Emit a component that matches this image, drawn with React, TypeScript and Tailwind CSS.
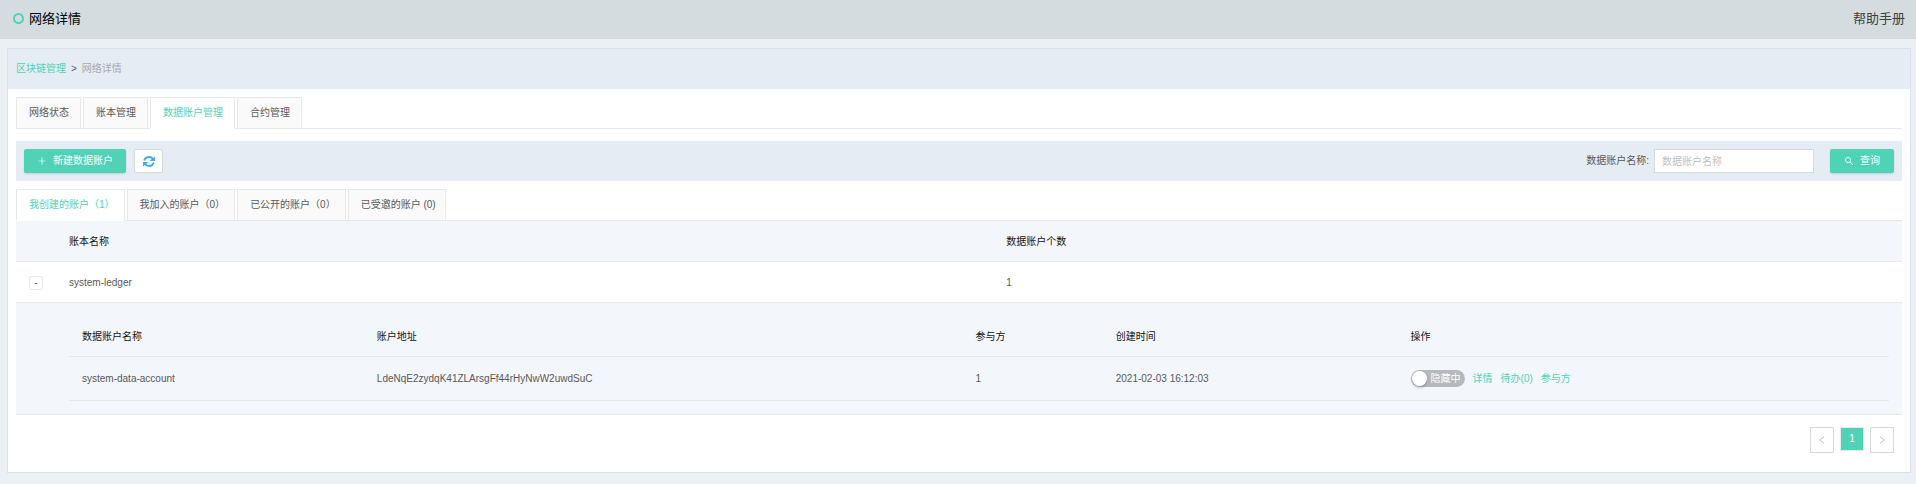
import { AiOutlineLeft, AiOutlinePlus, AiOutlineRight, AiOutlineSearch } from 'react-icons/ai';

const mainTabs = ['网络状态', '账本管理', '数据账户管理', '合约管理'];
const accountTabs = ['我创建的账户（1）', '我加入的账户（0）', '已公开的账户（0）', '已受邀的账户 (0)'];

function RefreshIcon() {
  return (
    <svg viewBox="0 0 24 22" className="h-[11px] w-3" fill="none" aria-hidden="true">
      <path d="M2.5 9C4 4.500 8 2 12 2c3.200 0 6 1.300 8 4" stroke="currentColor" strokeWidth="4" />
      <path d="M24 1v9h-11z" fill="currentColor" />
      <path d="M21.500 13C20 17.500 16 20 12 20c-3.200 0-6-1.300-8-4" stroke="currentColor" strokeWidth="4" />
      <path d="M0 21v-9h11z" fill="currentColor" />
    </svg>
  );
}

function TabBar({ tabs, active, itemClass }: { tabs: string[]; active: number; itemClass: string }) {
  return (
    <div role="tablist" className="flex h-8 gap-0.5 border-b border-[#e8e8e8]">
      {tabs.map((tab, i) => (
        <button
          key={tab}
          type="button"
          role="tab"
          aria-selected={i === active}
          className={`-mb-px h-8 border pl-3 whitespace-nowrap ${itemClass} ${
            i === active
              ? 'border-[#e8e8e8] border-b-white bg-white text-[#50d2b6]'
              : 'border-[#e8e8e8] bg-[#fafafa] text-[#595959]'
          }`}
        >
          {tab}
        </button>
      ))}
    </div>
  );
}

function AccountTable() {
  return (
    <table className="w-full table-fixed border-collapse text-left">
      <colgroup>
        <col className="w-[16.2%]" />
        <col className="w-[32.9%]" />
        <col className="w-[7.7%]" />
        <col className="w-[16.2%]" />
        <col />
      </colgroup>
      <thead>
        <tr className="h-10 border-b border-[#e8e8e8] text-[#141414]">
          <th className="px-[13px] pt-0.5 font-normal">数据账户名称</th>
          <th className="px-[13px] pt-0.5 font-normal">账户地址</th>
          <th className="px-[13px] pt-0.5 font-normal">参与方</th>
          <th className="px-[13px] pt-0.5 font-normal">创建时间</th>
          <th className="px-[13px] pt-0.5 font-normal">操作</th>
        </tr>
      </thead>
      <tbody>
        <tr className="h-11 border-b border-[#e8e8e8]">
          <td className="px-[13px]">system-data-account</td>
          <td className="px-[13px]">LdeNqE2zydqK41ZLArsgFf44rHyNwW2uwdSuC</td>
          <td className="px-[13px]">1</td>
          <td className="px-[13px]">2021-02-03 16:12:03</td>
          <td className="px-[13px]">
            <div className="flex items-center gap-2">
              <button
                type="button"
                role="switch"
                aria-checked="false"
                className="flex h-[17px] w-[54px] items-center gap-1 rounded-full bg-[#b5b9bc] pl-px text-white"
              >
                <span className="size-[15px] shrink-0 rounded-full bg-white shadow-[0_2px_3px_rgba(0,35,11,0.2)]" />
                隐藏中
              </button>
              <a href="#detail" className="text-[#50d2b6]">详情</a>
              <a href="#todo" className="text-[#50d2b6]">待办(0)</a>
              <a href="#participants" className="text-[#50d2b6]">参与方</a>
            </div>
          </td>
        </tr>
      </tbody>
    </table>
  );
}

export default function App() {
  return (
    <div className="min-h-screen bg-[#ebf0f4] pb-3 font-['Liberation_Sans','Noto_Sans_CJK_SC',sans-serif] text-[10px] leading-4 text-[#595959]">
      <header className="flex h-[39px] items-center justify-between bg-[#d5dcdf] pr-[11px] pb-0.5 pl-[13px] text-[13px]">
        <h1 className="flex items-center gap-[5px] text-black">
          <span className="size-[11px] rounded-full border-2 border-[#50d2b6]" />
          网络详情
        </h1>
        <a href="#help" className="text-[#404040]">帮助手册</a>
      </header>

      <main className="mt-[9px] mr-[5px] ml-[7px] border border-[#dae1ea] bg-white">
        <nav aria-label="面包屑" className="flex h-10 items-center gap-[5px] bg-[#e5ecf4] px-2">
          <a href="#chain" className="text-[#50d2b6]">区块链管理</a>
          <span>&gt;</span>
          <span className="text-[#a6a9ad]">网络详情</span>
        </nav>

        <div className="px-2 pt-2">
          <TabBar tabs={mainTabs} active={2} itemClass="pr-[11px]" />

          <div className="mt-3 mb-2 flex h-10 items-center justify-between bg-[#e5ecf4] px-2">
            <div className="flex gap-2">
              <button
                type="button"
                className="flex h-6 w-[102px] items-center justify-center gap-1.5 rounded-xs bg-[#50d2b6] text-white shadow-[0_1px_2px_rgba(0,0,0,0.12)]"
              >
                <AiOutlinePlus className="size-[10px]" />
                新建数据账户
              </button>
              <button
                type="button"
                aria-label="刷新"
                className="flex h-6 w-[29px] items-center justify-center rounded-xs border border-[#d9d9d9] bg-white text-[#40a9ff]"
              >
                <RefreshIcon />
              </button>
            </div>
            <form className="flex items-center">
              <label htmlFor="account-name" className="mr-[5px]">数据账户名称:</label>
              <input
                id="account-name"
                type="text"
                placeholder="数据账户名称"
                className="mr-4 h-6 w-40 border border-[#d9d9d9] bg-white px-[7px] placeholder:text-[#bfbfbf]"
              />
              <button
                type="button"
                className="flex h-6 w-16 items-center justify-center gap-1.5 rounded-xs bg-[#50d2b6] text-white shadow-[0_1px_2px_rgba(0,0,0,0.12)]"
              >
                <AiOutlineSearch className="size-[10px]" />
                查询
              </button>
            </form>
          </div>

          <TabBar tabs={accountTabs} active={0} itemClass="pr-[9px]" />

          <table className="w-full table-fixed border-collapse text-left">
            <colgroup>
              <col className="w-10" />
              <col className="w-[49.7%]" />
              <col />
            </colgroup>
            <thead>
              <tr className="h-10 border-b border-[#e8e8e8] bg-[#f3f6fb] text-[#141414]">
                <th />
                <th className="px-[13px] pt-0.5 font-normal">账本名称</th>
                <th className="px-[13px] pt-0.5 font-normal">数据账户个数</th>
              </tr>
            </thead>
            <tbody>
              <tr className="h-[41px] border-b border-[#e8e8e8]">
                <td className="pt-0.5 pl-[13px]">
                  <button
                    type="button"
                    aria-expanded="true"
                    className="flex size-3.5 items-center justify-center rounded-xs border border-[#e8e8e8] bg-white"
                  >
                    -
                  </button>
                </td>
                <td className="px-[13px] pt-0.5">system-ledger</td>
                <td className="px-[13px] pt-0.5">1</td>
              </tr>
              <tr className="border-b border-[#e8e8e8] bg-[#f3f6fb]">
                <td />
                <td colSpan={2} className="px-[13px] pt-[14px] pb-[13px]">
                  <AccountTable />
                </td>
              </tr>
            </tbody>
          </table>

          <nav aria-label="分页" className="mt-3 mb-[19px] flex items-start justify-end gap-1.5 pr-2">
            <button
              type="button"
              aria-label="上一页"
              className="flex h-[26px] w-6 items-center justify-center border border-[#d9d9d9] text-[#bfbfbf]"
            >
              <AiOutlineLeft className="size-[10px]" />
            </button>
            <button
              type="button"
              aria-current="page"
              className="flex size-6 items-center justify-center border border-[#e8e8e8] bg-[#50d2b6] text-white"
            >
              1
            </button>
            <button
              type="button"
              aria-label="下一页"
              className="flex h-[26px] w-6 items-center justify-center border border-[#d9d9d9] text-[#bfbfbf]"
            >
              <AiOutlineRight className="size-[10px]" />
            </button>
          </nav>
        </div>
      </main>
    </div>
  );
}
